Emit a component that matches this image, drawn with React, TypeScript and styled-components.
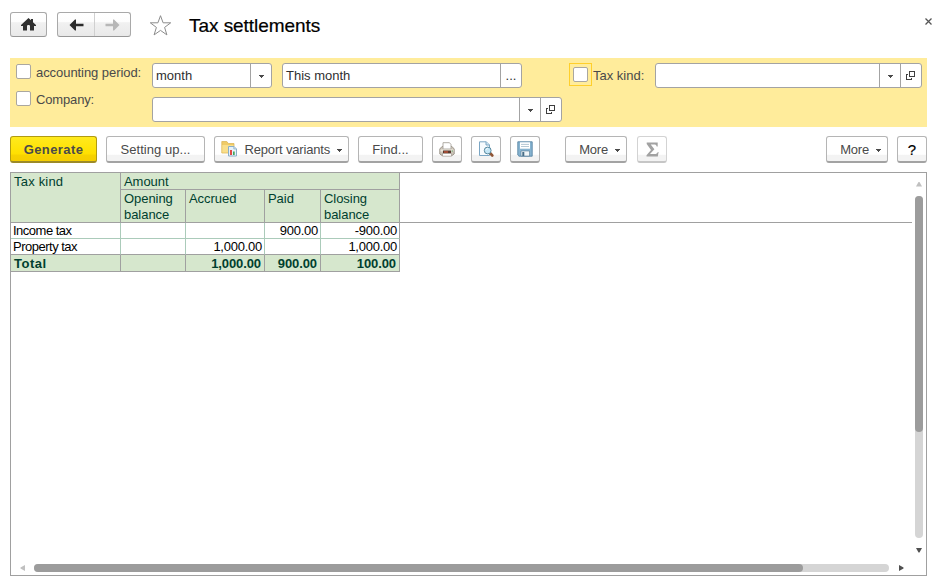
import React from "react";
import styled, { createGlobalStyle, css } from "styled-components";

const GlobalStyle = createGlobalStyle`
  * { box-sizing: border-box; }
  body { margin: 0; background: #fff; overflow: hidden; }
  body, button { font-family: "Liberation Sans", Arial, sans-serif; font-size: 13px; color: #4a4a4a; }
`;

const Page = styled.div`
  width: 943px;
  height: 581px;
  padding: 12px 16px 5px 10px;
  display: flex;
  flex-direction: column;
  overflow: hidden;
`;

const Text = styled.span<{ $ls?: number }>`
  white-space: pre;
  letter-spacing: ${(p) => p.$ls ?? 0}px;
`;

/* Header */
const Header = styled.header`
  display: flex;
  height: 46px;
  flex: none;
  align-items: flex-start;
`;

const NavGroup = styled.div<{ $gap?: number }>`
  display: flex;
  height: 25px;
  margin-right: ${(p) => p.$gap ?? 0}px;
  border: 1px solid #a9a9a9;
  border-bottom-color: #979797;
  border-radius: 3px;
  overflow: hidden;
  background: linear-gradient(#fff 0%, #fdfdfd 38%, #f1f1f1 42%, #e9e9e9 100%);
`;

const NavButton = styled.button<{ $width: number; $divided?: boolean }>`
  width: ${(p) => p.$width}px;
  padding: 0;
  border: 0;
  border-left: ${(p) => (p.$divided ? "1px solid #d0d0d0" : "0")};
  background: none;
  display: flex;
  align-items: center;
  justify-content: center;
`;

const Title = styled.h1`
  margin: 3px 0 0 16px;
  font-size: 19px;
  line-height: 21px;
  font-weight: 400;
  color: #000;
  letter-spacing: -0.05px;
  -webkit-text-stroke: 0.2px #000;
`;

const StarIcon = styled.svg`
  margin-top: 2px;
`;

const CloseIcon = styled.svg`
  margin: 6px -5px 0 auto;
`;

/* Filters */
const Filters = styled.section`
  flex: none;
  height: 69px;
  background: #ffec9b;
  padding: 5px 5px 5px 6px;
  display: flex;
  flex-direction: column;
  gap: 9px;
`;

const FilterLine = styled.div`
  display: flex;
  height: 25px;
`;

const LabelCell = styled.label<{ $offset: number }>`
  width: 136px;
  display: flex;
  gap: 5px;
  line-height: 17px;
  margin-top: ${(p) => p.$offset}px;
`;

const Check = styled.span`
  display: block;
  width: 15px;
  height: 15px;
  flex: none;
  border: 1px solid #aaa7a0;
  border-radius: 2px;
  background: #fff;
`;

const FocusedCheck = styled.span`
  width: 23px;
  height: 23px;
  border: 1px solid #ffcf2b;
  margin-left: 47px;
  padding: 3px;
`;

const TaxLabel = styled.label`
  width: 63px;
  padding-left: 1px;
  line-height: 25px;
`;

const Field = styled.div<{ $width: number; $gap?: number }>`
  width: ${(p) => p.$width}px;
  height: 25px;
  margin-right: ${(p) => p.$gap ?? 0}px;
  border: 1px solid #a3a3a3;
  border-radius: 3px;
  background: #fff;
  display: flex;
  color: #2f2f2f;
`;

const FieldValue = styled.div`
  flex: 1;
  padding-left: 3px;
  line-height: 23px;
`;

const FieldButton = styled.div`
  width: 21px;
  border-left: 1px solid #a3a3a3;
  display: flex;
  align-items: center;
  justify-content: center;
  line-height: 27px;
`;

/* Command bar */
const Toolbar = styled.div`
  flex: none;
  height: 45px;
  padding-top: 9px;
  display: flex;
`;

const Button = styled.button<{
  $width: number;
  $gap?: number;
  $primary?: boolean;
  $disabled?: boolean;
  $push?: boolean;
  $menu?: boolean;
}>`
  width: ${(p) => p.$width}px;
  height: 27px;
  flex: none;
  padding: 0 ${(p) => (p.$menu ? 6 : 0)}px 0 0;
  margin-right: ${(p) => p.$gap ?? 9}px;
  ${(p) => p.$push && css`margin-left: auto;`}
  display: flex;
  align-items: center;
  justify-content: ${(p) => (p.$menu ? "flex-end" : "center")};
  border: 1px solid #b5b5b5;
  border-bottom: 2px solid #a3a3a3;
  border-radius: 3px;
  background: linear-gradient(#fff 0 72%, #f3f3f3 76% 100%);
  ${(p) =>
    p.$primary &&
    css`
      font-weight: 700;
      border-color: #b19b12;
      border-bottom-color: #9c8a28;
      background: linear-gradient(#ffea1e, #ffe000 70%, #f6d200 76%, #f5ce00);
    `}
  ${(p) =>
    p.$disabled &&
    css`
      border-color: #d3d3d3;
      border-bottom-color: #c6c6c6;
    `}
`;

const CaretSvg = styled.svg<{ $left?: number }>`
  margin-left: ${(p) => p.$left ?? 0}px;
  margin-top: 2px;
`;

const FolderSvg = styled.svg`
  margin: -1px 7px 0 0;
`;

const Help = styled.span`
  font-size: 15px;
  color: #000;
  -webkit-text-stroke: 0.2px #000;
`;

/* Report */
const Report = styled.main`
  flex: 1;
  border: 1px solid #a0a0a0;
  display: flex;
  flex-direction: column;
`;

const Upper = styled.div`
  flex: 1;
  min-height: 0;
  display: flex;
`;

const Sheet = styled.div`
  flex: 1;
  display: flex;
  align-items: flex-start;
`;

const FreezeLine = styled.div`
  flex: 1;
  height: 50px;
  border-bottom: 1px solid #a0a0a0;
`;

const Table = styled.div`
  display: grid;
  grid-template-columns: 110px 65px 79px 56px 79px;
  grid-template-rows: 17px 33px 16px 16px 17px;
`;

const HeadCell = styled.div<{ $rows?: number; $cols?: number; $ls?: number }>`
  grid-row: span ${(p) => p.$rows ?? 1};
  grid-column: span ${(p) => p.$cols ?? 1};
  background: #d6e7cd;
  border-right: 1px solid #a0a0a0;
  border-bottom: 1px solid #a0a0a0;
  color: #003f2f;
  padding: 1px 0 0 3px;
  line-height: 16px;
  white-space: pre;
  letter-spacing: ${(p) => p.$ls ?? -0.05}px;
`;

const Cell = styled.div<{ $num?: boolean; $last?: boolean; $end?: boolean }>`
  border-right: 1px solid ${(p) => (p.$end ? "#a0a0a0" : "#abcbba")};
  border-bottom: 1px solid ${(p) => (p.$last ? "#a0a0a0" : "#abcbba")};
  color: #000;
  padding: 0 2px;
  line-height: 16px;
  text-align: ${(p) => (p.$num ? "right" : "left")};
  letter-spacing: ${(p) => (p.$num ? -0.25 : -0.5)}px;
`;

const TotalCell = styled.div<{ $num?: boolean }>`
  background: #d6e7cd;
  border-right: 1px solid #a0a0a0;
  border-bottom: 1px solid #a0a0a0;
  color: #003f2f;
  font-weight: 700;
  padding: 0 3px;
  line-height: 17px;
  text-align: ${(p) => (p.$num ? "right" : "left")};
  letter-spacing: ${(p) => (p.$num ? -0.1 : 0.5)}px;
`;

const VScroll = styled.div`
  width: 14px;
  padding: 9px 0 0 3px;
  display: flex;
  flex-direction: column;
`;

const VTrack = styled.div`
  width: 8px;
  height: 342px;
  flex: none;
  margin: 9px 0 10px;
  border-radius: 4px;
  background: #d5d5d5;
`;

const VThumb = styled.div`
  height: 236px;
  border-radius: 4px;
  background: #9c9c9c;
`;

const HScroll = styled.div`
  height: 11px;
  flex: none;
  padding-left: 9px;
  display: flex;
  align-items: flex-start;
`;

const HTrack = styled.div`
  width: 855px;
  height: 8px;
  margin: 0 10px 0 9px;
  border-radius: 4px;
  background: #d5d5d5;
`;

const HThumb = styled.div`
  width: 769px;
  height: 8px;
  border-radius: 4px;
  background: #9c9c9c;
`;

const ArrowSvg = styled.svg`
  display: block;
  flex: none;
`;

const Caret = ({ left }: { left?: number }) => (
  <CaretSvg $left={left} width="5" height="3" viewBox="0 0 5 3" shapeRendering="crispEdges">
    <path d="M0 0h5v1H4v1H3v1H2V2H1V1H0z" fill="#4a4a4a" />
  </CaretSvg>
);

const OpenIcon = () => (
  <svg width="10" height="10" viewBox="0 0 10 10" fill="none" stroke="#3f3f3f" shapeRendering="crispEdges">
    <path d="M3.5 .5h5v5h-5zM2 3.5H.5v5h5V7" />
  </svg>
);

type Direction = "up" | "down" | "left" | "right";

const arrowPaths: Record<Direction, string> = {
  up: "M1 4.5L3.5 0h1L7 4.5z",
  down: "M1 0h6L4.5 4.5h-1z",
  left: "M5 1v6L0.5 4.5v-1z",
  right: "M0 1l4.5 2.5v1L0 7z",
};

const Arrow = ({ dir, color }: { dir: Direction; color: string }) => {
  const vertical = dir === "up" || dir === "down";
  return (
    <ArrowSvg width={vertical ? 8 : 5} height={vertical ? 5 : 8}>
      <path d={arrowPaths[dir]} fill={color} />
    </ArrowSvg>
  );
};

const HomeIcon = () => (
  <svg width="15" height="13" viewBox="0 0 15 13">
    <path d="M7.5 0L10 2.3V1h2v3.2L15 7v1h-2v4.5H9V8.3C9 7.4 8.4 7 7.5 7S6 7.4 6 8.3v4.2H2V8H0V7z" fill="#303030" />
  </svg>
);

const BackIcon = () => (
  <svg width="15" height="12" viewBox="0 0 15 12">
    <path d="M.5 6L6 .5h1v4.2h7.5v2.6H7v4.2H6z" fill="#2c2c2c" />
  </svg>
);

const ForwardIcon = () => (
  <svg width="15" height="12" viewBox="0 0 15 12">
    <path d="M14.5 6L9 .5H8v4.2H.5v2.6H8v4.2h1z" fill="#b7b7b7" />
  </svg>
);

const FolderIcon = () => (
  <FolderSvg width="17" height="17" viewBox="0 0 17 17">
    <path d="M.8 13V1.5h5l1.5 2H13V13z" fill="#f0cb66" stroke="#dcb75a" strokeWidth=".8" />
    <path d="M1.3 5h11.2v2.5H8.5v5H1.3z" fill="#f9df8c" />
    <path d="M7.5 6.5H13L15.5 9v7h-8z" fill="#e6f1f9" stroke="#8aaec8" />
    <path d="M9 10h2v5H9z" fill="#e14944" />
    <path d="M12 11.5h1.7V15H12z" fill="#43a65b" />
    <path d="M12.8 6.8V9h2.5" fill="#c5dfef" stroke="#8aaec8" strokeWidth=".7" />
  </FolderSvg>
);

const PrinterIcon = () => (
  <svg width="16" height="15" viewBox="0 0 16 15">
    <path d="M.8 7L3 4.5h10L15.2 7v5L13 13.5H3L.8 12z" fill="#cdc6ba" stroke="#968e84" strokeWidth=".9" />
    <path d="M4 7V.7h6.5L12 2.5V7z" fill="#fff" stroke="#a8a49c" strokeWidth=".9" />
    <path d="M1.5 7.5h13v2h-13z" fill="#ece8df" />
    <path d="M4 8.5h8v3H4z" fill="#58392f" />
    <path d="M5 9.5h4v1H5z" fill="#ec603d" />
    <path d="M3.5 11.5h9v2.7h-9z" fill="#fff" stroke="#a39b92" strokeWidth=".7" />
    <path d="M12.5 8.5h1.5v1h-1.5z" fill="#5c9a60" />
  </svg>
);

const PreviewIcon = () => (
  <svg width="16" height="16" viewBox="0 0 16 16">
    <path d="M1.5 .8h6.8l3.2 3.2v10.5h-10z" fill="#f7fbfe" stroke="#7ba6c4" />
    <path d="M8 .8V4h3.5" fill="#cee3f0" stroke="#7ba6c4" />
    <path d="M12 12l2.3 2.5" stroke="#8f5637" strokeWidth="2.6" strokeLinecap="round" />
    <circle cx="9.7" cy="9.5" r="3.4" fill="#c4e6f6" stroke="#58899f" />
    <path d="M8 9c.2-1 .8-1.5 1.7-1.5" fill="none" stroke="#fff" />
  </svg>
);

const SaveIcon = () => (
  <svg width="16" height="16" viewBox="0 0 16 16">
    <path d="M.8 .8h14.4v14.4H2L.8 14z" fill="#86b3d0" stroke="#5b87a5" strokeWidth=".9" />
    <path d="M3 1.3h10v6.4H3z" fill="#fff" />
    <path d="M4 3.4h8M4 5.5h8" stroke="#b5c8d4" />
    <path d="M4 10h8.5v5H4z" fill="#f0f5f8" stroke="#557b93" strokeWidth=".6" />
    <path d="M5.3 11h2v4h-2z" fill="#476d87" />
  </svg>
);

const SigmaIcon = () => (
  <svg width="13" height="15" viewBox="0 0 13 15">
    <path d="M.7.5h11v4h-1C10.3 2.8 9.8 2.4 8 2.4H4.7L8.4 7.2l-4.4 4.9h4.6c1.8 0 2.6-.6 3.2-2.1h.8l-.8 4.5H.5v-1.3L5 8.1.7 1.9z" fill="#a2a2a2" />
  </svg>
);

const rows = [
  ["Income tax", "", "", "900.00", "-900.00"],
  ["Property tax", "", "1,000.00", "", "1,000.00"],
];
const totals = ["Total", "", "1,000.00", "900.00", "100.00"];

export default function App() {
  return (
    <Page>
      <GlobalStyle />
      <Header>
        <NavGroup $gap={10}>
          <NavButton $width={35} aria-label="Home"><HomeIcon /></NavButton>
        </NavGroup>
        <NavGroup $gap={18}>
          <NavButton $width={36} aria-label="Back"><BackIcon /></NavButton>
          <NavButton $width={36} $divided aria-label="Forward"><ForwardIcon /></NavButton>
        </NavGroup>
        <StarIcon width="24" height="23" viewBox="0 0 24 23">
          <path d="M11.5 1.7l2.6 7.1h7.6l-6.1 4.6 2.3 7.5-6.4-4.5-6.4 4.5 2.3-7.5-6.1-4.6h7.6z" fill="#fff" stroke="#8c8c8c" />
        </StarIcon>
        <Title>Tax settlements</Title>
        <CloseIcon width="7" height="7" viewBox="0 0 7 7">
          <path d="M.5.5l6 6m0-6l-6 6" stroke="#555" strokeWidth="1.3" />
        </CloseIcon>
      </Header>

      <Filters>
        <FilterLine>
          <LabelCell $offset={1}><Check /><Text $ls={-0.06}>accounting period:</Text></LabelCell>
          <Field $width={120} $gap={10}>
            <FieldValue><Text>month</Text></FieldValue>
            <FieldButton><Caret /></FieldButton>
          </Field>
          <Field $width={240}>
            <FieldValue><Text>This month</Text></FieldValue>
            <FieldButton>...</FieldButton>
          </Field>
          <FocusedCheck><Check /></FocusedCheck>
          <TaxLabel><Text>Tax kind:</Text></TaxLabel>
          <Field $width={267}>
            <FieldValue />
            <FieldButton><Caret /></FieldButton>
            <FieldButton><OpenIcon /></FieldButton>
          </Field>
        </FilterLine>
        <FilterLine>
          <LabelCell $offset={-6}><Check /><Text $ls={-0.15}>Company:</Text></LabelCell>
          <Field $width={410}>
            <FieldValue />
            <FieldButton><Caret /></FieldButton>
            <FieldButton><OpenIcon /></FieldButton>
          </Field>
        </FilterLine>
      </Filters>

      <Toolbar>
        <Button $width={87} $primary><Text $ls={0.4}>Generate</Text></Button>
        <Button $width={99}><Text $ls={0.05}>Setting up...</Text></Button>
        <Button $width={135} $menu><FolderIcon /><Text $ls={-0.18}>Report variants</Text><Caret left={7} /></Button>
        <Button $width={65}><Text $ls={0.05}>Find...</Text></Button>
        <Button $width={30} aria-label="Print"><PrinterIcon /></Button>
        <Button $width={30} aria-label="Preview"><PreviewIcon /></Button>
        <Button $width={30} $gap={25} aria-label="Save"><SaveIcon /></Button>
        <Button $width={62} $gap={10} $menu><Text $ls={-0.2}>More</Text><Caret left={7} /></Button>
        <Button $width={30} $gap={0} $disabled aria-label="Sum"><SigmaIcon /></Button>
        <Button $width={62} $push $menu><Text $ls={-0.2}>More</Text><Caret left={7} /></Button>
        <Button $width={30} $gap={0}><Help>?</Help></Button>
      </Toolbar>

      <Report>
        <Upper>
          <Sheet>
            <Table>
              <HeadCell $rows={2} $ls={0.2}>Tax kind</HeadCell>
              <HeadCell $cols={4}>Amount</HeadCell>
              <HeadCell>{"Opening\nbalance"}</HeadCell>
              <HeadCell>Accrued</HeadCell>
              <HeadCell>Paid</HeadCell>
              <HeadCell>{"Closing\nbalance"}</HeadCell>
              {rows.map((row, r) =>
                row.map((value, c) => (
                  <Cell key={`${r}-${c}`} $num={c > 0} $last={r === rows.length - 1} $end={c === 4}>
                    {value}
                  </Cell>
                ))
              )}
              {totals.map((value, c) => (
                <TotalCell key={c} $num={c > 0}>{value}</TotalCell>
              ))}
            </Table>
            <FreezeLine />
          </Sheet>
          <VScroll>
            <Arrow dir="up" color="#c0c0c0" />
            <VTrack><VThumb /></VTrack>
            <Arrow dir="down" color="#505050" />
          </VScroll>
        </Upper>
        <HScroll>
          <Arrow dir="left" color="#c0c0c0" />
          <HTrack><HThumb /></HTrack>
          <Arrow dir="right" color="#505050" />
        </HScroll>
      </Report>
    </Page>
  );
}
